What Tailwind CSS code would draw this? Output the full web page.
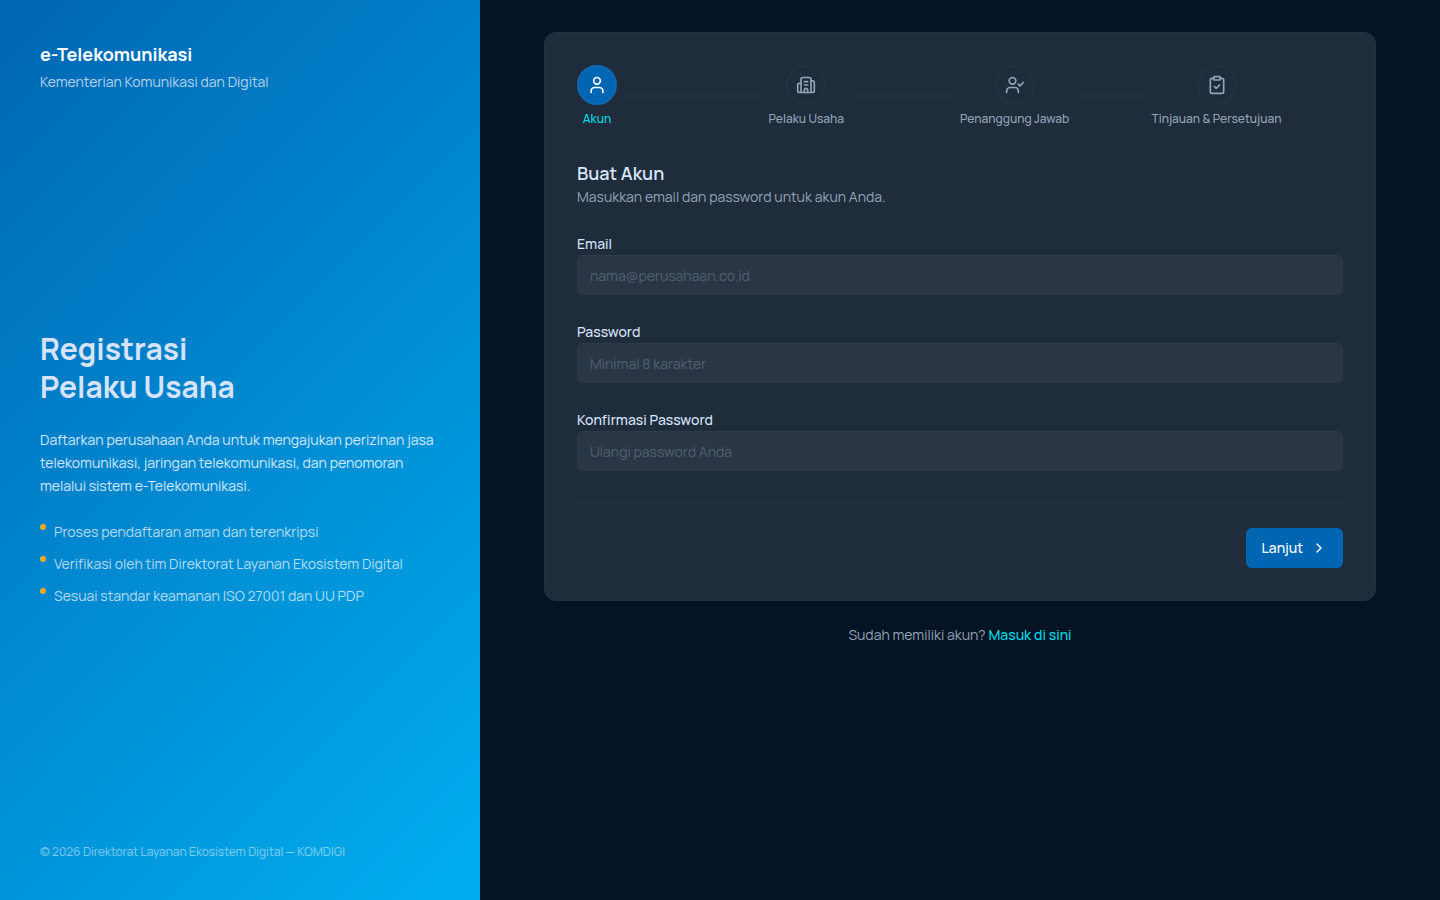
<!DOCTYPE html>
<html lang="id">
<head>
    <meta charset="UTF-8">
    <meta name="viewport" content="width=device-width, initial-scale=1.0">
    <script src="https://cdn.jsdelivr.net/npm/@tailwindcss/browser@4"></script>
    <title>Registrasi Pelaku Usaha - e-Telekomunikasi</title>
</head>
<body class="flex min-h-screen bg-[#051424] font-['Manrope','Inter',sans-serif] text-sm text-[#d6e3fa]">

    <!-- Brand panel -->
    <aside class="flex w-1/3 flex-col justify-between bg-[linear-gradient(135deg,#0066b3_0%,#00aeef_100%)] p-10">
        <header>
            <p class="text-lg font-bold text-white">e-Telekomunikasi</p>
            <p class="mt-1 text-white/70">Kementerian Komunikasi dan Digital</p>
        </header>

        <div>
            <h1 class="text-3xl leading-tight font-bold">Registrasi<br>Pelaku Usaha</h1>
            <p class="mt-6 leading-relaxed text-white/80">Daftarkan perusahaan Anda untuk mengajukan perizinan jasa telekomunikasi, jaringan telekomunikasi, dan penomoran melalui sistem e-Telekomunikasi.</p>
            <ul class="mt-6 space-y-3 text-white/70">
                <li class="flex gap-2">
                    <span class="mt-0.5 size-1.5 shrink-0 rounded-full bg-[#f0ab1c]"></span>
                    Proses pendaftaran aman dan terenkripsi
                </li>
                <li class="flex gap-2">
                    <span class="mt-0.5 size-1.5 shrink-0 rounded-full bg-[#f0ab1c]"></span>
                    Verifikasi oleh tim Direktorat Layanan Ekosistem Digital
                </li>
                <li class="flex gap-2">
                    <span class="mt-0.5 size-1.5 shrink-0 rounded-full bg-[#f0ab1c]"></span>
                    Sesuai standar keamanan ISO 27001 dan UU PDP
                </li>
            </ul>
        </div>

        <footer class="text-xs text-white/50">© 2026 Direktorat Layanan Ekosistem Digital — KOMDIGI</footer>
    </aside>

    <main class="flex-1 px-16 py-8">
        <div class="rounded-xl border border-[#243141] bg-[#1f2c3b] p-8">

            <!-- Stepper -->
            <ol class="grid grid-cols-4 text-xs font-medium text-[#94a3b8]">
                <li class="flex items-center">
                    <div class="flex flex-col items-center gap-1.5">
                        <span class="flex size-10 items-center justify-center rounded-full border-2 border-[#0d69b0] bg-[#0066b3] text-white">
                            <svg class="size-5" viewBox="0 0 24 24" fill="none" stroke="currentColor" stroke-width="2" stroke-linecap="round" stroke-linejoin="round"><path d="M19 21v-2a4 4 0 0 0-4-4H9a4 4 0 0 0-4 4v2"/><circle cx="12" cy="7" r="4"/></svg>
                        </span>
                        <span class="whitespace-nowrap text-[#00dae6]">Akun</span>
                    </div>
                    <div class="mx-2 h-0.5 flex-1 bg-[#243141]"></div>
                </li>
                <li class="flex items-center">
                    <div class="flex flex-col items-center gap-1.5">
                        <span class="flex size-10 items-center justify-center rounded-full border-2 border-[#243141]">
                            <svg class="size-5" viewBox="0 0 24 24" fill="none" stroke="currentColor" stroke-width="2" stroke-linecap="round" stroke-linejoin="round"><path d="M10 12h4"/><path d="M10 8h4"/><path d="M14 21v-3a2 2 0 0 0-4 0v3"/><path d="M6 10H4a2 2 0 0 0-2 2v7a2 2 0 0 0 2 2h16a2 2 0 0 0 2-2V9a2 2 0 0 0-2-2h-2"/><path d="M6 21V5a2 2 0 0 1 2-2h8a2 2 0 0 1 2 2v16"/></svg>
                        </span>
                        <span class="whitespace-nowrap">Pelaku Usaha</span>
                    </div>
                    <div class="mx-2 h-0.5 flex-1 bg-[#243141]"></div>
                </li>
                <li class="flex items-center">
                    <div class="flex flex-col items-center gap-1.5">
                        <span class="flex size-10 items-center justify-center rounded-full border-2 border-[#243141]">
                            <svg class="size-5" viewBox="0 0 24 24" fill="none" stroke="currentColor" stroke-width="2" stroke-linecap="round" stroke-linejoin="round"><path d="m16 11 2 2 4-4"/><path d="M16 21v-2a4 4 0 0 0-4-4H6a4 4 0 0 0-4 4v2"/><circle cx="9" cy="7" r="4"/></svg>
                        </span>
                        <span class="whitespace-nowrap">Penanggung Jawab</span>
                    </div>
                    <div class="mx-2 h-0.5 flex-1 bg-[#243141]"></div>
                </li>
                <li class="flex items-center">
                    <div class="flex flex-col items-center gap-1.5">
                        <span class="flex size-10 items-center justify-center rounded-full border-2 border-[#243141]">
                            <svg class="size-5" viewBox="0 0 24 24" fill="none" stroke="currentColor" stroke-width="2" stroke-linecap="round" stroke-linejoin="round"><rect width="8" height="4" x="8" y="2" rx="1" ry="1"/><path d="M16 4h2a2 2 0 0 1 2 2v14a2 2 0 0 1-2 2H6a2 2 0 0 1-2-2V6a2 2 0 0 1 2-2h2"/><path d="m9 14 2 2 4-4"/></svg>
                        </span>
                        <span class="whitespace-nowrap">Tinjauan &amp; Persetujuan</span>
                    </div>
                </li>
            </ol>

            <!-- Account form -->
            <form class="mt-8">
                <h2 class="text-lg font-semibold">Buat Akun</h2>
                <p class="text-[#94a3b8]">Masukkan email dan password untuk akun Anda.</p>

                <div class="mt-6 space-y-6">
                    <div>
                        <label for="email" class="block pt-0.5 leading-[22px] font-medium">Email</label>
                        <input type="email" id="email" placeholder="nama@perusahaan.co.id" class="block h-10 w-full rounded-md border border-[#2e3a4a] bg-[#2a3646] px-3 placeholder:text-[#526070]">
                    </div>
                    <div>
                        <label for="password" class="block pt-0.5 leading-[22px] font-medium">Password</label>
                        <input type="password" id="password" placeholder="Minimal 8 karakter" class="block h-10 w-full rounded-md border border-[#2e3a4a] bg-[#2a3646] px-3 placeholder:text-[#526070]">
                    </div>
                    <div>
                        <label for="confirm" class="block pt-0.5 leading-[22px] font-medium">Konfirmasi Password</label>
                        <input type="password" id="confirm" placeholder="Ulangi password Anda" class="block h-10 w-full rounded-md border border-[#2e3a4a] bg-[#2a3646] px-3 placeholder:text-[#526070]">
                    </div>
                </div>

                <div class="mt-8 flex justify-end border-t border-[#243141] pt-6">
                    <button type="button" class="flex h-10 items-center gap-2 rounded-md bg-[#0066b3] px-4 font-medium text-white hover:bg-[#005a9e]">
                        Lanjut
                        <svg class="size-4" viewBox="0 0 24 24" fill="none" stroke="currentColor" stroke-width="2" stroke-linecap="round" stroke-linejoin="round"><path d="m9 18 6-6-6-6"/></svg>
                    </button>
                </div>
            </form>
        </div>

        <p class="mt-6 text-center text-[#94a3b8]">Sudah memiliki akun? <a href="#" class="font-medium text-[#00dae6] hover:underline">Masuk di sini</a></p>
    </main>

</body>
</html>
